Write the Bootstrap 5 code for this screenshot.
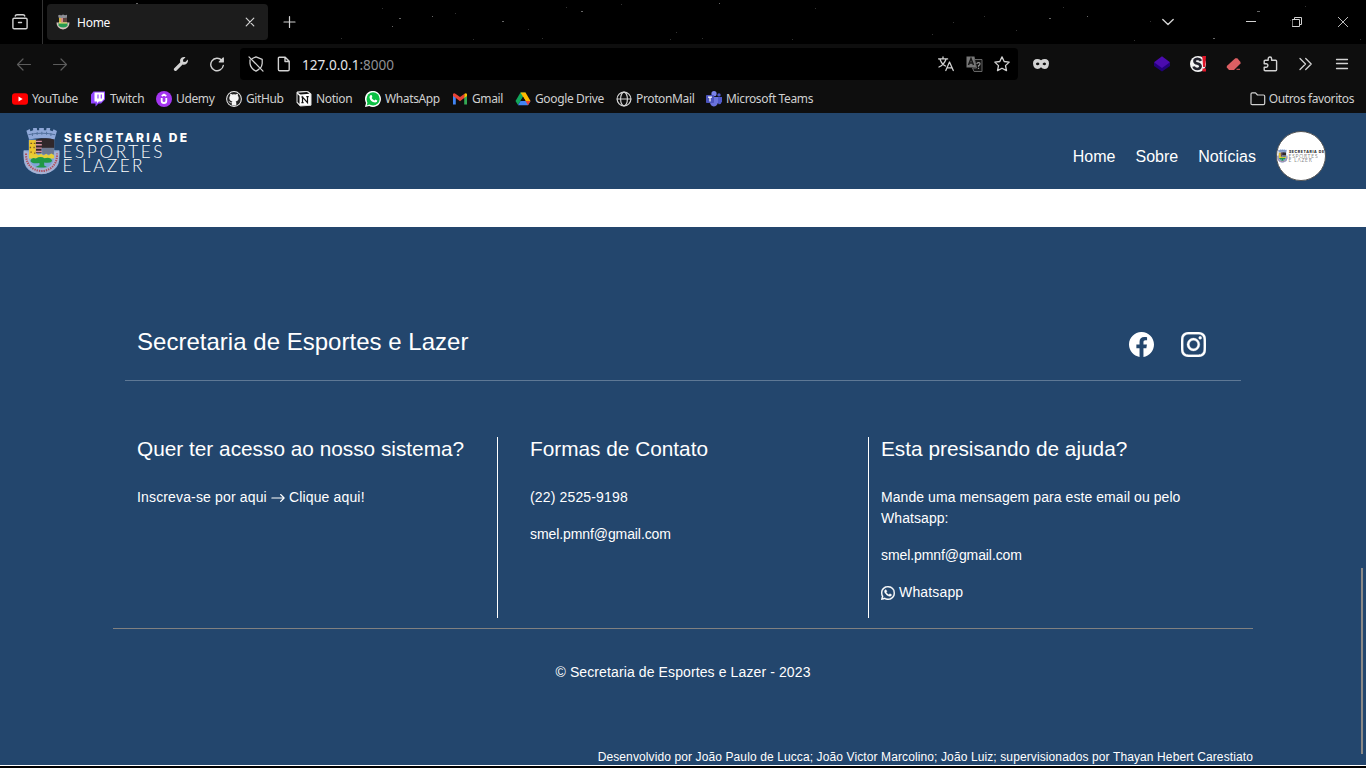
<!DOCTYPE html>
<html lang="pt-BR">
<head>
<meta charset="utf-8">
<meta name="viewport" content="width=device-width, initial-scale=1">
<title>Home</title>
<link rel="stylesheet" href="https://cdn.jsdelivr.net/npm/bootstrap@5.3.0/dist/css/bootstrap.min.css">
<style>
  html, body { height: 768px; overflow: hidden; }
  body { font-family: "Liberation Sans", Arial, sans-serif; background: #fff; color: #fff; }
  svg { display: block; flex: none; }
  .browser { font-family: "Noto Sans", "Open Sans", sans-serif; color: #fbfbfe; }
  .ln { fill: none; stroke: #d2d2d2; stroke-width: 1.2; stroke-linecap: round; stroke-linejoin: round; }
  .tabstrip { height: 44px; background: #000; }
  .stars { left: 0; top: 0; z-index: 0; }
  .tabstrip > :not(.stars) { position: relative; }
  .slot { display: flex; align-items: center; justify-content: center; width: 36px; flex: none; }
  .slot-win { width: 46px; }
  .slot-url { width: 28px; }
  .recent { width: 43px; border-right: 1px solid #333; padding-right: 2px; }
  .browser-tab { width: 221px; height: 36px; margin-left: 4px; background: #1c1c1c; border-radius: 4px; padding: 0 9px; font-size: 12px; }
  .tab-title { margin-left: 7px; margin-top: 1px; letter-spacing: -.25px; }
  .toolbar { height: 40px; background: #0e0e0e; padding: 0 6px; }
  .urlbar { width: 778px; height: 32px; background: #000; border-radius: 4px; margin: 0 5px; padding: 0 2px; font-size: 13.6px; }
  .url-text { margin-top: 2px; letter-spacing: -.02px; color: #e4e4e8; }
  .history-gap { margin-right: 85px; }
  .port { color: #8f8f94; }
  .bookmarks { height: 29px; background: #0e0e0e; padding: 0 12px; font-size: 12px; color: #d0d0d0; letter-spacing: -.37px; }
  .bookmark-grid { display: grid; grid-template-columns: 78px 66px 70px 70px 69px 87px 63px 101px 90px 110px; }
  .bm { display: flex; align-items: center; gap: 4px; white-space: nowrap; }
  .bm-last { gap: 3px; letter-spacing: -.4px; }

  .bg-site { background: #23466d; }
  .site-nav { height: 76px; padding: 10px 40px 0 23px; }
  .site-nav a { color: #fff; text-decoration: none; padding-top: 2px; }
  .site-logo { margin-bottom: 10px; }
  .brand-bold { font-family: Inter, sans-serif; font-weight: 800; font-size: 12px; }
  .brand-thin { font-family: Lato, sans-serif; font-weight: 300; font-size: 17.2px; }
  .menu { gap: 20px; }
  .avatar { width: 50px; height: 50px; border: 1px solid #555; background: #fff; overflow: hidden; }
  .blank { height: 38px; }
  .site-footer { height: 538px; font-size: 14px; line-height: 21px; }
  .footer-box { width: 1140px; margin: 0 auto; padding-top: 99px; }
  .footer-head { height: 55px; margin: 0 12px; padding: 0 35px 0 12px; border-bottom: 1px solid #5e7895; }
  .footer-head h1 { font-size: 24px; line-height: 32px; font-weight: 400; margin: 0; letter-spacing: .02px; }
  .social { gap: 27px; padding-top: 6px; }
  .footer-cols { margin: 56px 12px 0; height: 181px; }
  .footer-cols h2 { font-size: 20.8px; line-height: 23px; font-weight: 400; margin: 0 0 27px; }
  .footer-cols p { margin: 0 0 16px; letter-spacing: .07px; }
  .footer-cols .loose { letter-spacing: .15px; }
  .footer-cols .mail { letter-spacing: -.09px; }
  .footer-col { width: 371px; padding: 0 12px; }
  .footer-col:first-child { width: 373px; }
  .ruled { border-right: 1px solid #fff; }
  .footer-col.contact { padding-left: 32px; }
  .closing { margin-top: 10px; border-top: 1px solid #808080; padding-top: 33px; letter-spacing: .11px; }
  .credits { font-size: 12px; line-height: 18px; margin-top: 65px; letter-spacing: .11px; white-space: nowrap; }
  .scroll-thumb { right: 3px; top: 568px; width: 2px; height: 186px; background: #8b8987; }
  .taskbar-edge { height: 3px; border-top: 1px solid #fff; background: #000; }
</style>
</head>
<body>
<svg width="0" height="0" class="position-absolute">
  <symbol id="crest" viewBox="0 0 110 140">
    <path d="M2 66H22L26 104L82 104L88 66H108V96Q106 120 80 132Q55 144 28 132Q2 118 2 92Z" fill="#8ea9d4"/>
    <path d="M10 8L20 3L22 10L30 7L30 0H41L42 7H48V0H62V7H69L70 0H81L80 7L88 10L91 4L101 9L94 34Q55 25 18 34Z" fill="#8fa8d8"/>
    <path d="M16 20Q55 11 96 20" fill="none" stroke="#34547f" stroke-width="2"/>
    <path d="M28 15v9m14-12v9m14-10v9m14-9v9m13-5v9" stroke="#54749f" stroke-width="3"/>
    <path d="M17 34H93V96Q90 121 55 128Q20 120 17 96Z" fill="#7fa5d8"/>
    <path d="M38 34Q70 27 93 34V60H55V75H38Z" fill="#30272a"/>
    <path d="M57 59H92V79H57Z" fill="#6c7890"/>
    <path d="M38 40H56M38 50H56M38 60H56M38 70H56" stroke="#d793a5" stroke-width="4"/>
    <path d="M18 36H38V90H18Z" fill="#edc52b"/>
    <path d="M22 46h5m5 0h5M20 58h4m7 0h4M22 72h4m7 3h4" stroke="#755629" stroke-width="4"/>
    <path d="M17 79L25 76L31 81L39 76L45 81L54 77L61 82L69 77L76 82L84 76L93 81V91H17Z" fill="#e5cf38"/>
    <path d="M22 98Q25 86 38 91Q52 83 64 90Q82 85 87 98Q81 106 63 103V112L74 118H34L49 111V104Q27 108 22 98Z" fill="#209846"/>
    <path d="M2 68L17 72Q14 105 37 117L55 121L75 116Q96 105 93 72L108 68Q112 110 82 130Q55 144 27 130Q-2 111 2 68Z" fill="#a7b2d2"/>
    <path d="M9 76Q8 107 30 121Q56 136 82 120Q103 105 101 76" fill="none" stroke="#b04c5c" stroke-width="6" stroke-dasharray="4 3"/>
  </symbol>
  <symbol id="whats" viewBox="0 0 16 16">
    <path d="M13.601 2.326A7.854 7.854 0 0 0 7.994 0C3.627 0 .068 3.558.064 7.926c0 1.399.366 2.76 1.057 3.965L0 16l4.204-1.102a7.933 7.933 0 0 0 3.79.965h.004c4.368 0 7.926-3.558 7.93-7.93A7.898 7.898 0 0 0 13.6 2.326zM7.994 14.521a6.573 6.573 0 0 1-3.356-.92l-.24-.144-2.494.654.666-2.433-.156-.251a6.56 6.56 0 0 1-1.007-3.505c0-3.626 2.957-6.584 6.591-6.584a6.56 6.56 0 0 1 4.66 1.931 6.557 6.557 0 0 1 1.928 4.66c-.004 3.639-2.961 6.592-6.592 6.592zm3.615-4.934c-.197-.099-1.17-.578-1.353-.646-.182-.065-.315-.099-.445.099-.133.197-.513.646-.627.775-.114.133-.232.148-.43.05-.197-.1-.836-.308-1.592-.985-.59-.525-.985-1.175-1.103-1.372-.114-.198-.011-.304.088-.403.087-.088.197-.232.296-.346.1-.114.133-.198.198-.33.065-.134.034-.248-.015-.347-.05-.099-.445-1.076-.612-1.47-.16-.389-.323-.335-.445-.34-.114-.007-.247-.007-.38-.007a.729.729 0 0 0-.529.247c-.182.198-.691.677-.691 1.654 0 .977.71 1.916.81 2.049.098.133 1.394 2.132 3.383 2.992.47.205.84.326 1.129.418.475.152.904.129 1.246.08.38-.058 1.171-.48 1.338-.943.164-.464.164-.86.114-.943-.049-.084-.182-.133-.38-.232z"/>
  </symbol>
</svg>

<header class="browser">
  <div class="tabstrip position-relative d-flex align-items-center">
    <svg class="stars position-absolute" width="1366" height="44" fill="#666">
      <path d="M399 18h2v1h-2zM581 11h2v1h-2zM502 21h2v1h-2zM432 16h1v1h-1zM392 26h1v1h-1zM719 3h1v1h-1zM1049 18h2v1h-2zM1087 16h1v1h-1zM1257 11h3v1h-3zM1213 38h2v1h-2zM136 3h2v1h-2z"/>
      <path opacity=".5" d="M542 38h1v1h-1zM473 39h1v1h-1zM528 29h1v1h-1zM566 7h1v1h-1zM621 4h1v1h-1zM676 32h1v1h-1zM670 39h1v1h-1zM702 38h1v1h-1zM815 8h1v1h-1zM792 39h1v1h-1zM932 34h1v1h-1zM953 22h1v1h-1zM984 16h1v1h-1zM1016 30h1v1h-1zM1063 7h1v1h-1zM1134 40h1v1h-1zM1150 21h1v1h-1zM1305 6h1v1h-1zM1290 20h1v1h-1zM1360 39h1v1h-1zM341 38h1v1h-1zM382 8h1v1h-1zM455 13h1v1h-1z"/>
    </svg>
    <div class="recent slot h-100">
      <svg width="18" height="18" class="ln" viewBox="0 0 18 18"><path d="M4.200 3Q4.500 1.700 6 1.700h6q1.500 0 1.800 1.300M3.200 5.200h11.600a1.300 1.300 0 0 1 1.300 1.300v8a1.300 1.300 0 0 1-1.300 1.300H3.200a1.300 1.300 0 0 1-1.300-1.300v-8a1.300 1.300 0 0 1 1.300-1.300ZM7.500 9.500h3" stroke-width="1.400"/></svg>
    </div>
    <div class="browser-tab d-flex align-items-center">
      <svg width="14" height="16" viewBox="0 0 14 16"><path d="M2 1.500 4 .8 5 1.400 7 .5 9 1.200 11 .7v3L3 4.400Z" fill="#8d8f96"/><path d="M3 4h8v8H3Z" fill="#5d4540"/><path d="M3 4h2.200v6H3Z" fill="#d4b33c"/><path d="M5 4h2v4H5z" fill="#d88a86"/><path d="M.5 8.500h13q0 6-6.500 7-6.500-1-6.500-7Z" fill="#d7c3bf"/><path d="M2.500 9h9v3q-4 3-9 0Z" fill="#269a52"/><path d="M3 9h8" stroke="#f1e46b"/></svg>
      <span class="tab-title">Home</span>
      <svg width="10" height="10" class="ln ms-auto me-1" viewBox="0 0 10 10"><path d="M1.200 1.200l7.600 7.600M8.800 1.200 1.200 8.800"/></svg>
    </div>
    <div class="slot ms-1"><svg width="14" height="14" class="ln" viewBox="0 0 14 14"><path d="M6.500 1.500v11M1 7h11"/></svg></div>
    <div class="slot ms-auto me-5"><svg width="14" height="10" class="ln" viewBox="-6 0 14 10" overflow="visible"><path d="M1.800 2.600 7 7.600l5.200-5" stroke-width="1.400"/></svg></div>
    <div class="slot slot-win"><svg width="10" height="10" class="ln" viewBox="0 0 10 10"><path d="M0 4.500h10" stroke-width="1" stroke-linecap="butt"/></svg></div>
    <div class="slot slot-win"><svg width="10" height="10" class="ln" viewBox="0 0 10 10"><path d="M.5 2.500h7v7h-7ZM2.500 2.500v-2h7v7h-2" stroke-width="1"/></svg></div>
    <div class="slot slot-win"><svg width="10" height="10" class="ln" viewBox="0 0 10 10"><path d="m.3.3 9.400 9.400m0-9.400L.3 9.700" stroke-width=".9"/></svg></div>
  </div>

  <div class="toolbar d-flex align-items-center">
    <div class="slot"><svg width="16" height="16" class="ln" style="stroke:#5c5c5c" viewBox="0 0 16 16"><path d="M14.500 8.500H1.500M7 3 1.500 8.500 7 14"/></svg></div>
    <div class="slot history-gap"><svg width="16" height="16" class="ln" style="stroke:#5c5c5c" viewBox="0 0 16 16"><path d="M1.500 8.500h13M9 3l5.500 5.500L9 14"/></svg></div>
    <div class="slot"><svg width="16" height="16" viewBox="0 0 16 16" fill="#d2d2d2"><path d="M14.800 3.500 12.300 6 10.200 5.800 10 3.700 12.500 1.200C10.500.500 8.400 1.200 7.500 3c-.6 1.200-.5 2.200-.2 3.300L1.300 12.300c-.7.7-.6 1.600 0 2.200.6.600 1.600.6 2.300-.1l6-6c1.200.4 2.500.3 3.600-.5 1.500-1 2.100-2.700 1.600-4.400Z"/></svg></div>
    <div class="slot"><svg width="16" height="16" class="ln" viewBox="0 0 16 16"><path d="M12.800 4.300A6.300 6.300 0 1 0 14.300 9.500" stroke-width="1.400"/><path fill="#d2d2d2" d="M14.300 2v4h-4Z"/></svg></div>
    <div class="urlbar d-flex align-items-center">
      <div class="slot slot-url"><svg width="16" height="16" class="ln" viewBox="0 0 16 16"><path d="M4.300 2.500 8 .9l6.200 2.500v4q-.3 2.700-1.600 4.600M2 3.900v3.500q.4 5 6 7.700 1.800-.8 3.100-2.100M1 .9l14 14.200" stroke-width="1.250"/></svg></div>
      <div class="slot slot-url"><svg width="16" height="16" class="ln" viewBox="0 0 16 16"><path d="M3.200 1.300h6l4 4v8.200q0 1.300-1.300 1.300H3.700q-1.300 0-1.300-1.300V2.200q0-.9.8-.9ZM9 1.500v4h4" stroke-width="1.400"/></svg></div>
      <span class="ms-1 url-text">127.0.0.1<span class="port">:8000</span></span>
      <div class="slot slot-url ms-auto"><svg width="16" height="16" class="ln" viewBox="0 0 16 16"><path d="M.6 2.900h9M5 1v1.900M2 3.200q1.700 5 5.500 6.800M8 3.200Q6 8.800 1 11M7.800 14.500 11.500 6l3.800 8.500M9 11.900h5" stroke-width="1.300"/></svg></div>
      <div class="slot slot-url"><svg width="17" height="16" viewBox="0 0 17 16"><path d="M.5.500h8l2 11H.5Z" fill="#777"/><path d="M8.500 3.500H16v12H8L6.500 12h4Z" fill="#111" stroke="#666"/><path d="M2.500 9 5 2.500 7.500 9M3.500 7h3" fill="none" stroke="#161616" stroke-width="1.500"/><path d="M10.800 8q.3-1.500 1.700-1.500 1.700.1 1.500 1.500-.1.900-1.500 1.800v.9m0 1.100v1.200" fill="none" stroke="#999" stroke-width="1.200"/></svg></div>
      <div class="slot slot-url"><svg width="16" height="16" class="ln" viewBox="0 0 16 16"><path d="m8 .900 2.200 4.600 5 .6-3.700 3.500 1 5L8 12.200l-4.500 2.400 1-5L.8 6.100l5-.6Z" stroke-width="1.300"/></svg></div>
    </div>
    <div class="slot"><svg width="16" height="16" viewBox="0 0 16 16" fill="#d2d2d2"><path fill-rule="evenodd" d="M4.200 3Q6.500 3 8 4.200 9.500 3 11.800 3 16 3.200 16 7.500 15.600 13 11.500 13 9.300 13 8 11.200 6.700 13 4.500 13 .4 12.800 0 7.500 0 3.200 4.200 3ZM4.500 6.600Q3 6.700 2.900 7.900 3.300 9.200 4.800 9.200 6.200 9.100 6.500 8 6.100 6.600 4.500 6.600ZM11.500 6.600Q10 6.700 9.500 8 9.900 9.100 11.200 9.200 12.700 9.200 13.100 7.900 13 6.700 11.500 6.600Z"/></svg></div>
    <div class="slot ms-auto"><svg width="16" height="16" viewBox="0 0 16 16"><path d="M0 7 8 1.500 16 7v3l-8 5.500L0 10Z" fill="#23007b"/><path d="m8 .300 8 6-8 5.700-8-5.700Z" fill="#4b0bae"/></svg></div>
    <div class="slot"><svg width="16" height="16" viewBox="0 0 16 16"><circle cx="8" cy="8" r="8" fill="#f3f3f3"/><path d="M11 4.800Q10 2.800 7.300 2.900 4.300 3.200 4.500 5.300 4.800 7.100 7.300 7.500 10.600 8.200 10.600 10.400 10.300 12.900 7.300 13 4.200 12.900 3.600 10.500" fill="none" stroke="#22222d" stroke-width="2.700"/><path d="M12.300 0H16l-.7 11h-2.200ZM12.500 12.500H16v3h-3.500Z" fill="#df1528"/></svg></div>
    <div class="slot"><svg width="16" height="16" viewBox="0 0 16 16"><path d="M9.300 2.300h2L14.500 6v1.500L8 14H3L.8 11.500V10Z" fill="#dc5f63"/><path d="M10.500 13.300H14" stroke="#dc5f63"/></svg></div>
    <div class="slot"><svg width="16" height="16" class="ln" viewBox="0 0 16 16"><path d="M3.200 4.300h3V2.700a1.700 1.700 0 0 1 3.400 0v1.600h4q1 0 1 1v8.500q0 1-1 1H3.200q-1 0-1-1v-2.600h2a1.700 1.700 0 0 0 0-3.400h-2V5.300q0-1 1-1Z" stroke-width="1.400"/></svg></div>
    <div class="slot"><svg width="16" height="16" class="ln" viewBox="0 0 16 16"><path d="m2 2.500 5.500 5.500L2 13.500M7.700 2.500 13.200 8l-5.500 5.500" stroke-width="1.300"/></svg></div>
    <div class="slot"><svg width="16" height="16" class="ln" viewBox="0 0 16 16"><path d="M2.500 3.500h11M2.500 7.500h11M2.500 12.500h11" stroke-width="1.300"/></svg></div>
  </div>

  <div class="bookmarks d-flex align-items-center">
    <div class="bookmark-grid">
      <div class="bm"><svg width="16" height="16" viewBox="0 0 16 16"><rect y="2.200" width="16" height="11.600" rx="3" fill="#f00"/><path d="m6.500 5.500 4.200 2.500-4.200 2.500Z" fill="#fff"/></svg>YouTube</div>
      <div class="bm"><svg width="16" height="16" viewBox="0 0 16 16"><path d="M3.500.500H15v8l-4 4H8.500L5.500 15.500v-3H1v-9Z" fill="#9146ff"/><path d="M4.500 1.500H14V8l-2.500 2.500H8.800L7 12.300v-1.800H4.500Z" fill="#fff"/><path d="M8 3.500v4M11.300 3.500v4" stroke="#9146ff" stroke-width="1.200"/></svg>Twitch</div>
      <div class="bm"><svg width="16" height="16" viewBox="0 0 16 16"><circle cx="8" cy="8" r="8" fill="#a435f0"/><path d="M5.700 7v3q0 2 2.300 2t2.300-2V7M5.700 5 8 3.500 10.300 5" fill="none" stroke="#fff" stroke-width="1.800"/></svg>Udemy</div>
      <div class="bm"><svg width="16" height="16" viewBox="0 0 16 16"><circle cx="8" cy="8" r="7.900" fill="#eee"/><circle cx="8" cy="8" r="6.900" fill="#222"/><path fill="#f5f5f5" d="M5.800 14.500v-2.400q-2 .4-2.600-1l-.8-1.200q1 0 1.600 1 .7 1 1.900.5l.4-1Q3.400 10 3.300 7q0-1.300.9-2.200-.3-1 .1-2.100 1 0 2.100.8 1.600-.4 3.200 0 1.200-.8 2.100-.8.5 1.100.1 2.100.9.900.9 2.200 0 3-3 3.400.6.600.6 1.600v2.500Z"/></svg>GitHub</div>
      <div class="bm"><svg width="16" height="16" viewBox="0 0 16 16"><path d="m1 1 10.500-.7L15 2.800v11.400L4.200 15 1 11.500Z" fill="#fff" stroke="#ddd"/><path d="M1.700 1.700 11 1l2.500 1.800-9 .6Z" fill="#111"/><path d="M4 4.500 14 4v9.300L4 14Z" fill="#fff"/><path d="M1.500 3 3.500 5v7.900L1.500 11Z" fill="#111"/><path d="M6.500 11.700V6L11.500 11.600V5.600M5.300 6h2M5.400 11.700h2.200M10.300 5.600h2.400" fill="none" stroke="#111" stroke-width="1.200"/></svg>Notion</div>
      <div class="bm"><svg width="16" height="16" viewBox="0 0 16 16"><path d="M0 16 1 11.900A8 8 0 1 1 4.200 15Z" fill="#fff"/><circle cx="8.100" cy="7.900" r="6.600" fill="#0bbf43"/><path d="m1.700 14.400 1-3.500 2.400 2.400Z" fill="#0bbf43"/><path d="m5.600 4 1 .1.800 1.900-.8 1q1.200 1.900 2.900 2.500l.9-1 1.900.9q.1 2-2.200 2.100Q5.300 10.800 4.500 6.500 4.300 5 5.600 4Z" fill="#fff"/></svg>WhatsApp</div>
      <div class="bm"><svg width="16" height="16" viewBox="0 0 16 16"><path d="M1 3v10.500h2.800V6Z" fill="#4285f4"/><path d="M12.200 6v7.500H15V3Z" fill="#34a853"/><path d="M12.200 3v4L15 5V3q-1-1.300-2.800 0Z" fill="#fbbc04"/><path d="M1 3q1-1.500 2.800 0L8 6.100 12.200 3v4L8 10.200 3.800 7 1 5Z" fill="#ea4335"/></svg>Gmail</div>
      <div class="bm"><svg width="16" height="16" viewBox="0 0 16 16"><path d="M5.500 1.500h5L8 6 3 14 .500 10Z" fill="#12a65b"/><path d="M5.500 1.500h5L15.500 10h-5Z" fill="#ffba00"/><path d="M5.500 10h10L13 14.200H3Z" fill="#4285f4"/><path d="M10.500 10h5L13 14.200Z" fill="#ea4335"/><path d="m8 5.800 2.500 4.200h-5Z" fill="#0e0e0e"/></svg>Google Drive</div>
      <div class="bm"><svg width="16" height="16" class="ln" viewBox="0 0 16 16"><circle cx="8" cy="8" r="6.900"/><ellipse cx="8" cy="8" rx="3.400" ry="6.900"/><path d="M1.200 8h13.600"/></svg>ProtonMail</div>
      <div class="bm"><svg width="16" height="16" viewBox="0 0 16 16"><circle cx="8" cy="2.700" r="2.600" fill="#7b83eb"/><circle cx="13" cy="3.900" r="1.700" fill="#5059c9"/><path d="M10 6h6v4.500q-.7 3-3.500 2.700Z" fill="#5059c9"/><path d="M4 6h8v5.500Q11 15.500 7.600 15.500 4.500 15 4 11.500Z" fill="#6a72dc"/><rect y="4" width="8" height="8" rx=".8" fill="#4b53bc"/><path d="M2 6.200h4M4 6.200v4.300" stroke="#fff" stroke-width="1.200"/></svg>Microsoft Teams</div>
    </div>
    <div class="bm bm-last ms-auto"><svg width="16" height="16" class="ln" viewBox="0 0 16 16"><path d="M1 12.500V3q0-1.200 1.200-1.200h3.300L7.500 4h6q1.200 0 1.200 1.200v7.100q0 1.300-1.300 1.300H2.200Q1 13.600 1 12.500Z"/></svg>Outros favoritos</div>
  </div>
</header>

<nav class="site-nav bg-site d-flex align-items-center justify-content-between">
  <svg class="site-logo" width="165" height="47" viewBox="0 0 165 47" fill="#fff">
    <use href="#crest" width="37" height="47"/>
    <text class="brand-bold" x="41" y="14" textLength="123">SECRETARIA DE</text>
    <text class="brand-thin" x="39.500" y="30.300" textLength="100">ESPORTES</text>
    <text class="brand-thin" x="39.500" y="44" textLength="80">E LAZER</text>
  </svg>
  <div class="menu d-flex align-items-center">
    <a href="#">Home</a><a href="#">Sobre</a><a href="#">Notícias</a>
    <div class="avatar rounded-circle d-flex align-items-center">
      <svg width="48" height="14" viewBox="0 0 165 47" fill="#222">
        <use href="#crest" width="37" height="47"/>
        <text class="brand-bold" x="41" y="14" textLength="121">SECRETARIA DE</text>
        <text class="brand-thin" x="39.500" y="30.300" textLength="100">ESPORTES</text>
        <text class="brand-thin" x="39.500" y="44" textLength="80">E LAZER</text>
      </svg>
    </div>
  </div>
</nav>
<div class="blank"></div>

<footer class="site-footer bg-site">
  <div class="footer-box">
    <div class="footer-head d-flex justify-content-between align-items-start">
      <h1>Secretaria de Esportes e Lazer</h1>
      <div class="d-flex social">
        <svg width="25" height="25" viewBox="0 0 16 16" fill="#fff"><path d="M16 8.049c0-4.446-3.582-8.050-8-8.050C3.580 0-.002 3.603-.002 8.050c0 4.017 2.926 7.347 6.750 7.951v-5.625h-2.030V8.050H6.750V6.275c0-2.017 1.195-3.131 3.022-3.131.876 0 1.791.157 1.791.157v1.980h-1.009c-.993 0-1.303.621-1.303 1.258v1.510h2.218l-.354 2.326H9.250V16c3.824-.604 6.750-3.934 6.750-7.951z"/></svg>
        <svg width="25" height="25" viewBox="0 0 16 16" fill="#fff" stroke="#fff" stroke-width=".2"><path d="M8 0C5.829 0 5.556.01 4.703.048 3.850.088 3.269.222 2.760.420a3.917 3.917 0 0 0-1.417.923A3.927 3.927 0 0 0 .420 2.760C.222 3.268.087 3.850.048 4.700.010 5.555 0 5.827 0 8.001c0 2.172.010 2.444.048 3.297.040.852.174 1.433.372 1.942.205.526.478.972.923 1.417.444.445.890.719 1.416.923.510.198 1.090.333 1.942.372C5.555 15.990 5.827 16 8 16s2.444-.010 3.298-.048c.851-.040 1.434-.174 1.943-.372a3.916 3.916 0 0 0 1.416-.923c.445-.445.718-.891.923-1.417.197-.509.332-1.090.372-1.942C15.990 10.445 16 10.173 16 8s-.010-2.445-.048-3.299c-.040-.851-.175-1.433-.372-1.941a3.926 3.926 0 0 0-.923-1.417A3.911 3.911 0 0 0 13.240.420c-.510-.198-1.092-.333-1.943-.372C10.443.010 10.172 0 7.998 0h.003zm-.717 1.442h.718c2.136 0 2.389.007 3.232.046.780.035 1.204.166 1.486.275.373.145.640.319.920.599.280.280.453.546.598.920.110.281.240.705.275 1.485.039.843.047 1.096.047 3.231s-.008 2.389-.047 3.232c-.035.780-.166 1.203-.275 1.485a2.470 2.470 0 0 1-.599.919c-.280.280-.546.453-.920.598-.280.110-.704.240-1.485.276-.843.038-1.096.047-3.232.047s-2.390-.009-3.233-.047c-.780-.036-1.203-.166-1.485-.276a2.478 2.478 0 0 1-.920-.598 2.480 2.480 0 0 1-.600-.920c-.109-.281-.240-.705-.275-1.485-.038-.843-.046-1.096-.046-3.233 0-2.136.008-2.388.046-3.231.036-.780.166-1.204.276-1.486.145-.373.319-.640.599-.920.280-.280.546-.453.920-.598.282-.110.705-.240 1.485-.276.738-.034 1.024-.044 2.515-.045v.002zm4.988 1.328a.960.960 0 1 0 0 1.920.960.960 0 0 0 0-1.920zm-4.270 1.122a4.109 4.109 0 1 0 0 8.217 4.109 4.109 0 0 0 0-8.217zm0 1.441a2.667 2.667 0 1 1 0 5.334 2.667 2.667 0 0 1 0-5.334z"/></svg>
      </div>
    </div>

    <div class="d-flex footer-cols">
      <div class="footer-col ruled">
        <h2 class="text-nowrap">Quer ter acesso ao nosso sistema?</h2>
        <p class="loose d-flex align-items-center">Inscreva-se por aqui&nbsp;<svg width="14" height="14" viewBox="0 0 16 16" fill="none" stroke="#fff" stroke-width="1.300" stroke-linecap="round" stroke-linejoin="round"><path d="M1 8h14M11 4l4 4-4 4"/></svg>&nbsp;Clique aqui!</p>
      </div>
      <div class="footer-col ruled contact">
        <h2>Formas de Contato</h2>
        <p class="loose">(22) 2525-9198</p>
        <p class="mail">smel.pmnf@gmail.com</p>
      </div>
      <div class="footer-col">
        <h2>Esta presisando de ajuda?</h2>
        <p>Mande uma mensagem para este email ou pelo<br>Whatsapp:</p>
        <p class="mail">smel.pmnf@gmail.com</p>
        <p class="loose d-flex align-items-center"><svg width="14" height="14" fill="#fff" stroke="#fff" stroke-width=".4"><use href="#whats"/></svg>&nbsp;Whatsapp</p>
      </div>
    </div>

    <div class="closing text-center">© Secretaria de Esportes e Lazer - 2023</div>
    <div class="credits text-end">Desenvolvido por João Paulo de Lucca; João Victor Marcolino; João Luiz; supervisionados por Thayan Hebert Carestiato</div>
  </div>
</footer>
<div class="taskbar-edge"></div>
<div class="scroll-thumb position-absolute"></div>
<script src="https://cdn.jsdelivr.net/npm/bootstrap@5.3.0/dist/js/bootstrap.bundle.min.js"></script>
</body>
</html>
